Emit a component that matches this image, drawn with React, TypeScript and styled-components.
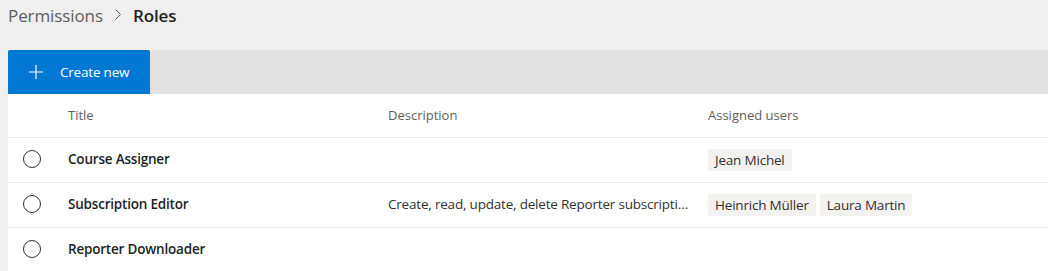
import React from "react";
import styled, { createGlobalStyle } from "styled-components";

const Global = createGlobalStyle`
  html, body { margin: 0; padding: 0; background: #efefef; }
  body { font-family: "Open Sans", "Noto Sans", sans-serif; color: #323130; }
  * { box-sizing: border-box; }
`;

const Page = styled.div`
  padding-left: 8px;
  width: 1048px;
  height: 271px;
  overflow: hidden;
`;

const Breadcrumb = styled.nav`
  display: flex;
  align-items: center;
  height: 30px;
  font-size: 17px;
  gap: 12px;
`;

const Crumb = styled.span<{ $current?: boolean }>`
  color: ${(p) => (p.$current ? "#201f1e" : "#605e5c")};
  font-weight: ${(p) => (p.$current ? 600 : 400)};
  letter-spacing: -0.1px;
`;

const Chevron = styled.svg`
  width: 6px;
  height: 11px;
  margin-top: -1px;
`;

const CommandBar = styled.div`
  margin-top: 20px;
  height: 44px;
  background: #e1e1e1;
  display: flex;
`;

const PrimaryButton = styled.button`
  display: flex;
  align-items: center;
  gap: 16px;
  height: 44px;
  width: 142px;
  padding: 0 0 0 20px;
  border: none;
  border-radius: 2px 2px 0 0;
  background: #0078d4;
  color: #fff;
  font-family: inherit;
  font-size: 13.5px;
  letter-spacing: -0.2px;
  cursor: pointer;
`;

const Table = styled.div`
  background: #fff;
`;

const Row = styled.div<{ $header?: boolean }>`
  display: grid;
  grid-template-columns: 60px 320px 320px 1fr;
  align-items: center;
  height: ${(p) => (p.$header ? "44px" : "45px")};
  border-bottom: 1px solid #edebe9;
  font-size: 14px;
`;

const HeaderCell = styled.div`
  color: #605e5c;
  font-size: 13px;
  padding-right: 20px;
  margin-top: -2px;
`;

const CheckCell = styled.div`
  display: flex;
  align-items: center;
  padding-left: 15px;
  margin-top: -2px;
`;

const Radio = styled.span`
  width: 18px;
  height: 18px;
  border: 1px solid #323130;
  border-radius: 50%;
`;

const TitleCell = styled.div`
  font-weight: 600;
  color: #201f1e;
  font-size: 13.5px;
  letter-spacing: -0.2px;
  margin-top: -3px;
`;

const DescCell = styled.div`
  color: #323130;
  font-size: 13.5px;
  letter-spacing: -0.2px;
  padding-right: 18px;
  white-space: nowrap;
  overflow: hidden;
  text-overflow: ellipsis;
  margin-top: -2px;
`;

const Users = styled.div`
  display: flex;
  gap: 4px;
`;

const Chip = styled.span`
  background: #f3f2f1;
  border-radius: 2px;
  height: 22px;
  line-height: 22px;
  padding: 0 7px;
  font-size: 13.5px;
  letter-spacing: -0.2px;
  color: #323130;
`;

const roles = [
  { title: "Course Assigner", desc: "", users: ["Jean Michel"] },
  {
    title: "Subscription Editor",
    desc: "Create, read, update, delete Reporter subscriptions",
    users: ["Heinrich Müller", "Laura Martin"],
  },
  { title: "Reporter Downloader", desc: "", users: [] },
];

export default function App() {
  return (
    <Page>
      <Global />
      <Breadcrumb>
        <Crumb>Permissions</Crumb>
        <Chevron viewBox="0 0 6 11">
          <path d="M0.5 0.5 L5.5 5.5 L0.5 10.5" fill="none" stroke="#605e5c" strokeWidth="1" />
        </Chevron>
        <Crumb $current>Roles</Crumb>
      </Breadcrumb>
      <CommandBar>
        <PrimaryButton>
          <svg width="16" height="16" viewBox="0 0 16 16">
            <path d="M8 1 V15 M1 8 H15" stroke="#fff" strokeWidth="1.2" />
          </svg>
          Create new
        </PrimaryButton>
      </CommandBar>
      <Table>
        <Row $header>
          <div />
          <HeaderCell>Title</HeaderCell>
          <HeaderCell>Description</HeaderCell>
          <HeaderCell>Assigned users</HeaderCell>
        </Row>
        {roles.map((r) => (
          <Row key={r.title}>
            <CheckCell>
              <Radio />
            </CheckCell>
            <TitleCell>{r.title}</TitleCell>
            <DescCell>{r.desc}</DescCell>
            <Users>
              {r.users.map((u) => (
                <Chip key={u}>{u}</Chip>
              ))}
            </Users>
          </Row>
        ))}
      </Table>
    </Page>
  );
}
